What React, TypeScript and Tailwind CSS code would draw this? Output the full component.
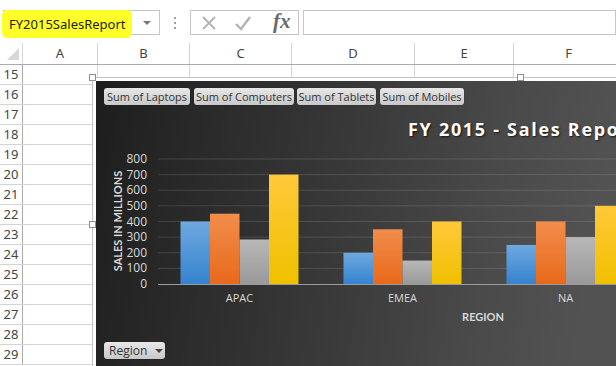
import React from "react";

const cols = [
  { l: "A", c: "w-[75px]" },
  { l: "B", c: "w-[92px]" },
  { l: "C", c: "w-[102px]" },
  { l: "D", c: "w-[123px]" },
  { l: "E", c: "w-[99px]" },
  { l: "F", c: "w-[110px]" },
];

const rows = [15, 16, 17, 18, 19, 20, 21, 22, 23, 24, 25, 26, 27, 28, 29];

const cats = [
  { name: "APAC", v: [400, 450, 285, 700] },
  { name: "EMEA", v: [200, 350, 150, 400] },
  { name: "NA", v: [250, 400, 300, 500] },
];

const grads = ["gB", "gO", "gG", "gY"];
const y = (v: number) => 144 - v * 0.15625;

function Plot() {
  const x0 = 62;
  const cw = 163;
  const bw = 29.5;
  return (
    <svg width="760" height="190" className="block" style={{ fontFamily: "'Open Sans', 'Noto Sans', sans-serif" }}>
      <defs>
        <linearGradient id="gB" x1="0" y1="0" x2="0" y2="1">
          <stop offset="0" stopColor="#6ea9df" />
          <stop offset="1" stopColor="#3583cf" />
        </linearGradient>
        <linearGradient id="gO" x1="0" y1="0" x2="0" y2="1">
          <stop offset="0" stopColor="#f28d4b" />
          <stop offset="1" stopColor="#e8691b" />
        </linearGradient>
        <linearGradient id="gG" x1="0" y1="0" x2="0" y2="1">
          <stop offset="0" stopColor="#b8b8b8" />
          <stop offset="1" stopColor="#999999" />
        </linearGradient>
        <linearGradient id="gY" x1="0" y1="0" x2="0" y2="1">
          <stop offset="0" stopColor="#ffc93a" />
          <stop offset="1" stopColor="#f0c000" />
        </linearGradient>
      </defs>
      {[100, 200, 300, 400, 500, 600, 700, 800].map((v) => (
        <line key={v} x1={x0} x2={x0 + 4 * cw} y1={y(v)} y2={y(v)} stroke="rgba(255,255,255,0.13)" strokeWidth="1" />
      ))}
      {[0, 100, 200, 300, 400, 500, 600, 700, 800].map((v) => (
        <text key={v} x={51} y={y(v) + 4} textAnchor="end" fontSize="12" fill="#d9d9d9">
          {v}
        </text>
      ))}
      <text
        x={21}
        y={81}
        transform="rotate(-90 21 81)"
        textAnchor="middle"
        dominantBaseline="central"
        fontSize="11"
        fontWeight="bold"
        fill="#d9d9d9"
        style={{ fontFamily: "Lato, 'Open Sans', sans-serif" }}
      >
        SALES IN MILLIONS
      </text>
      {cats.map((c, i) => (
        <g key={c.name}>
          {c.v.map((v, j) => (
            <rect
              key={j}
              x={x0 + i * cw + 22.5 + j * bw}
              y={y(v)}
              width={bw}
              height={144 - y(v)}
              fill={`url(#${grads[j]})`}
            />
          ))}
          <text x={x0 + i * cw + cw / 2} y={162} textAnchor="middle" fontSize="11" fill="#d9d9d9">
            {c.name}
          </text>
        </g>
      ))}
      <line x1={x0} x2={x0 + 4 * cw} y1={144.5} y2={144.5} stroke="#9c9c9c" strokeWidth="1" />
      <text x={387} y={181} textAnchor="middle" fontSize="11" fontWeight="bold" fill="#d9d9d9" style={{ fontFamily: "Lato, 'Open Sans', sans-serif" }}>
        REGION
      </text>
    </svg>
  );
}

const btn =
  "h-[17px] rounded-[3px] bg-gradient-to-b from-[#e8e8e8] to-[#c8c8c8] text-[#333] text-[11px] leading-[17px] text-center whitespace-nowrap shadow-[0_0_1px_rgba(0,0,0,0.6)]";

export default function App() {
  return (
    <div
      className="relative w-[616px] h-[366px] overflow-hidden bg-white"
      style={{ fontFamily: "'Noto Sans', 'Open Sans', sans-serif" }}
    >
      {/* formula bar */}
      <div className="flex items-start h-[43px] pt-[10px] pl-[3px]">
        <div className="relative w-[157px] h-[25px] shrink-0 border border-[#c6c6c6] flex items-center">
          <span className="-ml-[2px] mt-[3px] h-[28px] pl-[7px] pr-[6px] bg-[#ffff2a] rounded-[5px] text-[13px] leading-[28px] text-[#222] whitespace-nowrap">
            FY2015SalesReport
          </span>
          <span className="ml-auto mr-[8px] w-0 h-0 border-l-[4px] border-r-[4px] border-t-[4px] border-l-transparent border-r-transparent border-t-[#777]" />
        </div>
        <div className="w-[30px] h-[25px] shrink-0 flex flex-col items-center justify-center gap-[3px]">
          <span className="w-[2px] h-[2px] bg-[#a0a0a0]" />
          <span className="w-[2px] h-[2px] bg-[#a0a0a0]" />
          <span className="w-[2px] h-[2px] bg-[#a0a0a0]" />
        </div>
        <div className="w-[109px] h-[25px] shrink-0 border border-[#c6c6c6] flex items-center">
          <svg width="16" height="16" viewBox="0 0 16 16" className="ml-[10px]">
            <path d="M2 2 L14 14 M14 2 L2 14" stroke="#b3b3b3" strokeWidth="1.8" />
          </svg>
          <svg width="18" height="16" viewBox="0 0 18 16" className="ml-[17px]">
            <path d="M2 9 L7 14 L16 2" stroke="#b3b3b3" strokeWidth="2.4" fill="none" />
          </svg>
          <span
            className="ml-[21px] text-[21px] italic font-bold text-[#6a6a6a] leading-none -mt-[3px]"
            style={{ fontFamily: "'Liberation Serif', 'DejaVu Serif', serif" }}
          >
            fx
          </span>
        </div>
        <div className="ml-[4px] flex-1 h-[25px] border border-[#c6c6c6]" />
      </div>

      {/* column headers */}
      <div className="flex h-[22px] border-b border-[#ababab] text-[13px] text-[#444]">
        <div className="w-[23px] shrink-0 flex items-end justify-end pr-[3px] pb-[4px] border-r border-[#d4d4d4]">
          <svg width="12" height="12" viewBox="0 0 12 12">
            <path d="M12 0 L12 12 L0 12 Z" fill="#d8d8d8" />
          </svg>
        </div>
        {cols.map((c) => (
          <div key={c.l} className={`${c.c} shrink-0 flex items-center justify-center border-r border-[#d4d4d4] leading-none`}>
            {c.l}
          </div>
        ))}
      </div>

      {/* rows */}
      <div className="flex flex-col">
        {rows.map((r) => (
          <div key={r} className="flex h-[20px] border-b border-[#d4d4d4]">
            <div className="w-[23px] shrink-0 flex items-center justify-center text-[13px] text-[#444] border-r border-[#ababab] leading-none">
              {r}
            </div>
            {cols.map((c) => (
              <div key={c.l} className={`${c.c} shrink-0 border-r border-[#d4d4d4]`} />
            ))}
          </div>
        ))}
      </div>

      {/* chart object */}
      <div className="absolute left-[92px] top-[77px] w-[780px] h-[320px] border border-[#c3c3c3] bg-white p-[3px]">
        <div
          className="w-[760px] h-[300px] bg-[linear-gradient(100deg,#1d1d1d_0%,#282828_12%,#383838_32%,#4a4a4a_52%,#525252_65%,#555555_100%)] text-[#d9d9d9]"
          style={{ fontFamily: "'Open Sans', 'Noto Sans', sans-serif" }}
        >
          <div className="flex pt-[7px] pl-[8px]">
            <div className={`${btn} w-[86px]`}>Sum of Laptops</div>
            <div className={`${btn} w-[100px] ml-[4px]`}>Sum of Computers</div>
            <div className={`${btn} w-[79px] ml-[3px]`}>Sum of Tablets</div>
            <div className={`${btn} w-[84px] ml-[4px]`}>Sum of Mobiles</div>
          </div>
          <div className="ml-[312px] mt-[13px] h-[22px] leading-[22px] text-[18px] font-bold tracking-[1.7px] text-white whitespace-nowrap [text-shadow:1px_1px_2px_rgba(0,0,0,0.7)]">
            FY 2015 - Sales Report
          </div>
          <Plot />
          <div className={`${btn} mt-[12px] ml-[8px] w-[61px] flex items-center pl-[5px] text-[12px]`}>
            <span>Region</span>
            <span className="ml-[8px] w-0 h-0 border-l-[4px] border-r-[4px] border-t-[4px] border-l-transparent border-r-transparent border-t-[#444]" />
          </div>
        </div>
      </div>

      {/* selection handles */}
      <div className="absolute left-[89px] top-[74px] w-[7px] h-[7px] bg-white border border-[#8e8e8e]" />
      <div className="absolute left-[517px] top-[74px] w-[7px] h-[7px] bg-white border border-[#8e8e8e]" />
      <div className="absolute left-[89px] top-[221px] w-[7px] h-[7px] bg-white border border-[#8e8e8e]" />
    </div>
  );
}
